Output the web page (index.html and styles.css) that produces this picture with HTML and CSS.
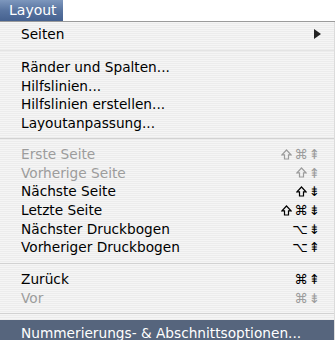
FILE: index.html
```html
<!DOCTYPE html>
<html lang="de">
<head>
  <meta charset="UTF-8">
  <title>Layout-Menü</title>
  <link rel="stylesheet" href="styles.css">
</head>
<body>
<svg width="0" height="0" class="defs">
  <symbol id="shift" viewBox="0 0 11 11">
    <path d="M5.5 1 L10 5.8 H7.5 V10 H3.5 V5.8 H1 Z" fill="none" stroke="currentColor" stroke-width="1.2" stroke-linejoin="miter"/>
  </symbol>
</svg>
<div class="menubar">
  <div class="menu-title">Layout</div>
</div>
<div class="menu">
  <div class="item first">
    <span>Seiten</span>
    <span class="arrow"></span>
  </div>
  <div class="sep sep-big"></div>
  <div class="item"><span>Ränder und Spalten...</span></div>
  <div class="item"><span>Hilfslinien...</span></div>
  <div class="item"><span>Hilfslinien erstellen...</span></div>
  <div class="item"><span>Layoutanpassung...</span></div>
  <div class="sep"></div>
  <div class="item disabled"><span>Erste Seite</span><span class="keys"><svg class="shift"><use href="#shift"/></svg>⌘⇞</span></div>
  <div class="item disabled"><span>Vorherige Seite</span><span class="keys"><svg class="shift"><use href="#shift"/></svg>⇞</span></div>
  <div class="item"><span>Nächste Seite</span><span class="keys"><svg class="shift"><use href="#shift"/></svg>⇟</span></div>
  <div class="item"><span>Letzte Seite</span><span class="keys"><svg class="shift"><use href="#shift"/></svg>⌘⇟</span></div>
  <div class="item"><span>Nächster Druckbogen</span><span class="keys">⌥⇟</span></div>
  <div class="item"><span>Vorheriger Druckbogen</span><span class="keys">⌥⇞</span></div>
  <div class="sep sep-mid"></div>
  <div class="item"><span>Zurück</span><span class="keys">⌘⇞</span></div>
  <div class="item disabled"><span>Vor</span><span class="keys">⌘⇟</span></div>
  <div class="sep"></div>
  <div class="item selected"><span>Nummerierungs- &amp; Abschnittsoptionen...</span></div>
</div>
</body>
</html>
```

FILE: styles.css
```css
body {
  margin: 0;
  width: 335px;
  height: 340px;
  overflow: hidden;
  background: #fff;
  font-family: 'DejaVu Sans', sans-serif;
  font-size: 13.7px;
}

.defs { position: absolute; }

.menubar {
  height: 21px;
  display: flex;
  background: #fff;
  border-bottom: 1px solid #9a9a9a;
}

.menu-title {
  width: 54px;
  padding-left: 9px;
  line-height: 21px;
  color: #fff;
  background: linear-gradient(#7d97bd, #5874a0 50%, #45618f);
  font-size: 14px;
}

.menu {
  height: 318px;
  padding-top: 3px;
  background: repeating-linear-gradient(#f5f5f5 0, #f5f5f5 1px, #ececec 1px, #ececec 2px);
  border-right: 1px solid #dcdcdc;
  box-sizing: border-box;
}

.item {
  height: 18.6px;
  display: flex;
  align-items: center;
  justify-content: space-between;
  padding: 0 13px 0 21px;
  color: #000;
}

.item.disabled { color: #9c9c9c; }

.keys {
  display: flex;
  align-items: center;
  font-size: 13.5px;
  letter-spacing: 1px;
}

.shift {
  width: 11px;
  height: 11px;
  margin-right: 2px;
}

.arrow {
  width: 0;
  height: 0;
  border-left: 7px solid #222;
  border-top: 5px solid transparent;
  border-bottom: 5px solid transparent;
}

.sep {
  height: 12.6px;
  display: flex;
  align-items: center;
}

.sep::after {
  content: "";
  flex: 1;
  height: 1px;
  background: #d2d2d2;
}

.sep-big { height: 14.4px; }
.sep-mid { height: 13.4px; }
.sep-big::after { background: #e4e4e4; }

.item.selected {
  height: 18px;
  padding-top: 4px;
  background: #56657d;
  color: #fff;
}
```
